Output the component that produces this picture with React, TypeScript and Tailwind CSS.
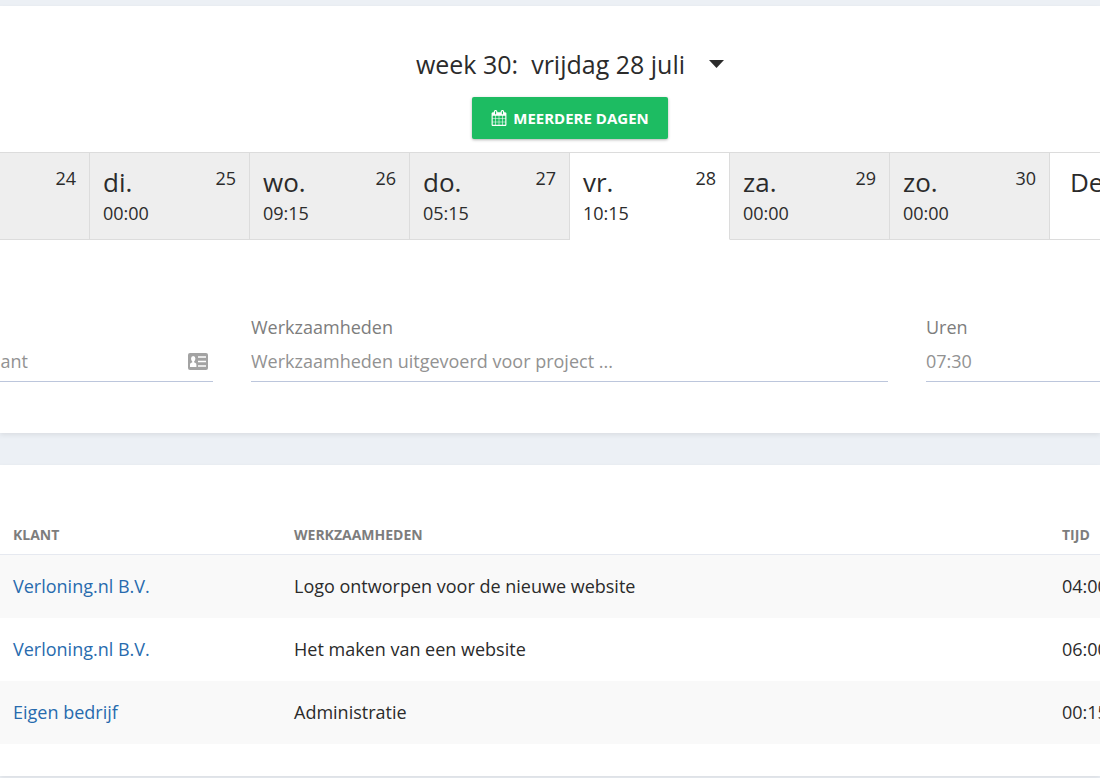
import React, { useState } from "react";

const days = [
  { name: "ma.", date: "24", time: "00:00" },
  { name: "di.", date: "25", time: "00:00" },
  { name: "wo.", date: "26", time: "09:15" },
  { name: "do.", date: "27", time: "05:15" },
  { name: "vr.", date: "28", time: "10:15" },
  { name: "za.", date: "29", time: "00:00" },
  { name: "zo.", date: "30", time: "00:00" },
];

const entries = [
  {
    client: "Verloning.nl B.V.",
    work: "Logo ontworpen voor de nieuwe website",
    time: "04:00",
  },
  {
    client: "Verloning.nl B.V.",
    work: "Het maken van een website",
    time: "06:00",
  },
  { client: "Eigen bedrijf", work: "Administratie", time: "00:15" },
];

const CalendarIcon = () => (
  <svg viewBox="0 0 1792 1792" className="size-4" fill="currentColor" aria-hidden="true">
    <path d="M192 1664h288v-288h-288v288zm352 0h320v-288h-320v288zm-352-352h288v-320h-288v320zm352 0h320v-320h-320v320zm-352-384h288v-288h-288v288zm736 736h320v-288h-320v288zm-384-736h320v-288h-320v288zm768 736h288v-288h-288v288zm-384-352h320v-320h-320v320zm-352-864v-288q0-13-9.5-22.5t-22.5-9.5h-64q-13 0-22.5 9.5t-9.5 22.5v288q0 13 9.5 22.5t22.5 9.5h64q13 0 22.5-9.5t9.5-22.5zm736 864h288v-320h-288v320zm-384-384h320v-288h-320v288zm384 0h288v-288h-288v288zm32-480v-288q0-13-9.5-22.5t-22.5-9.5h-64q-13 0-22.5 9.5t-9.5 22.5v288q0 13 9.5 22.5t22.5 9.5h64q13 0 22.5-9.5t9.5-22.5zm384-64v1280q0 52-38 90t-90 38h-1408q-52 0-90-38t-38-90v-1280q0-52 38-90t90-38h128v-96q0-66 47-113t113-47h64q66 0 113 47t47 113v96h384v-96q0-66 47-113t113-47h64q66 0 113 47t47 113v96h128q52 0 90 38t38 90z" />
  </svg>
);

const ContactIcon = () => (
  <svg viewBox="0 0 20 17" className="w-5 h-[17px]" aria-hidden="true">
    <rect width="20" height="17" rx="2" fill="#a3a3a3" />
    <ellipse cx="5.2" cy="5.7" rx="2.2" ry="2.6" fill="#fff" />
    <path
      d="M4.2 7h2v2.6c1.4.3 2.2.9 2.2 2.2V14H2v-2.2c0-1.3.8-1.9 2.2-2.2z"
      fill="#fff"
    />
    <path d="M10 4h8M10 8.5h8M10 13h8" stroke="#fff" strokeWidth="1.7" />
  </svg>
);

const inputClass =
  "block w-full h-[41px] bg-transparent border-b border-[#bcc6dc] text-lg text-[#929292] placeholder:text-[#929292] outline-none";

const DayTabs = () => {
  const [selected, setSelected] = useState("28");
  return (
    <div className="grid grid-cols-[minmax(0,9fr)_repeat(6,minmax(0,16fr))_minmax(0,5fr)] mt-[13px] border-t border-[#dcdcdc]">
      {days.map((day, index) => (
        <button
          key={day.date}
          type="button"
          onClick={() => setSelected(day.date)}
          className={
            "flex justify-between overflow-hidden border-r border-b border-r-[#dcdcdc] py-3 px-[13px] text-left " +
            (day.date === selected
              ? "bg-white border-b-white"
              : "bg-[#eeeeee] border-b-[#dcdcdc]")
          }
        >
          <span className={index === 0 ? "invisible w-0" : ""}>
            <span className="block text-[26px] leading-[34px]">{day.name}</span>
            <span className="block text-lg leading-7">{day.time}</span>
          </span>
          <span className="text-lg leading-[26px]">{day.date}</span>
        </button>
      ))}
      <button
        type="button"
        className="overflow-hidden border-b border-[#dcdcdc] pt-3 pb-10 pl-5 text-left text-[26px] leading-[34px] whitespace-nowrap"
      >
        De
      </button>
    </div>
  );
};

const EntryForm = () => {
  const [client, setClient] = useState("");
  const [work, setWork] = useState("");
  const [hours, setHours] = useState("07:30");
  return (
    <form className="grid grid-cols-[minmax(0,228fr)_minmax(0,637fr)_minmax(0,174fr)] gap-x-[38px] -ml-[15px] mt-[73px] pb-[51px]">
      <div>
        <label htmlFor="client" className="invisible block text-lg leading-7">
          Klant
        </label>
        <div className="flex items-center border-b border-[#bcc6dc] pr-[5px]">
          <input
            id="client"
            placeholder="Klant"
            value={client}
            onChange={(e) => setClient(e.target.value)}
            className="min-w-0 flex-1 h-10 bg-transparent text-lg text-[#929292] placeholder:text-[#929292] outline-none"
          />
          <button type="button" aria-label="Kies klant">
            <ContactIcon />
          </button>
        </div>
      </div>
      <div>
        <label htmlFor="work" className="block text-lg leading-7 text-[#7d7d7d]">
          Werkzaamheden
        </label>
        <input
          id="work"
          placeholder="Werkzaamheden uitgevoerd voor project ..."
          value={work}
          onChange={(e) => setWork(e.target.value)}
          className={inputClass}
        />
      </div>
      <div>
        <label htmlFor="hours" className="block text-lg leading-7 text-[#7d7d7d]">
          Uren
        </label>
        <input
          id="hours"
          value={hours}
          onChange={(e) => setHours(e.target.value)}
          className={inputClass}
        />
      </div>
    </form>
  );
};

const EntryTable = () => (
  <table className="w-full table-fixed text-left text-lg">
    <thead>
      <tr className="border-b border-[#e6e9f0] text-sm font-bold text-[#7d7d7d]">
        <th className="w-[26%] pl-[13px] py-2 leading-[22px]">KLANT</th>
        <th className="pl-2 py-2 leading-[22px]">WERKZAAMHEDEN</th>
        <th className="w-[46px] pl-2 py-2 leading-[22px]">TIJD</th>
      </tr>
    </thead>
    <tbody>
      {entries.map((entry, index) => (
        <tr key={index} className="h-[63px] odd:bg-[#f9f9f9]">
          <td className="pl-[13px]">
            <a href="#" className="text-[#286bae]">
              {entry.client}
            </a>
          </td>
          <td className="pl-2">{entry.work}</td>
          <td className="pl-2 overflow-hidden whitespace-nowrap">{entry.time}</td>
        </tr>
      ))}
    </tbody>
  </table>
);

const App = () => {
  return (
    <div className="min-h-screen overflow-hidden bg-[#ecf0f5] pt-[6px] font-['Open_Sans',sans-serif] text-[#2b2b2b]">
      <section className="bg-white pt-10 shadow-[0_2px_5px_rgba(0,0,0,0.08)]">
        <div className="flex flex-col items-center pl-10">
          <button type="button" className="flex items-center gap-6 text-[25px] leading-9">
            <span className="whitespace-pre">week 30:  vrijdag 28 juli</span>
            <svg viewBox="0 0 15 8" className="w-[15px] h-2" fill="currentColor" aria-hidden="true">
              <path d="M0 0h15L7.5 8z" />
            </svg>
          </button>
          <button
            type="button"
            className="flex items-center gap-[6px] mt-[15px] h-[42px] px-[19px] rounded-xs bg-[#1dbc62] text-[15px] font-bold text-white shadow-[0_1px_3px_rgba(0,0,0,0.3)]"
          >
            <CalendarIcon />
            MEERDERE DAGEN
          </button>
        </div>
        <DayTabs />
        <EntryForm />
      </section>
      <section className="bg-white mt-8 pt-[51px] pb-8 shadow-[0_2px_5px_rgba(0,0,0,0.08)]">
        <EntryTable />
      </section>
    </div>
  );
};

export default App;
